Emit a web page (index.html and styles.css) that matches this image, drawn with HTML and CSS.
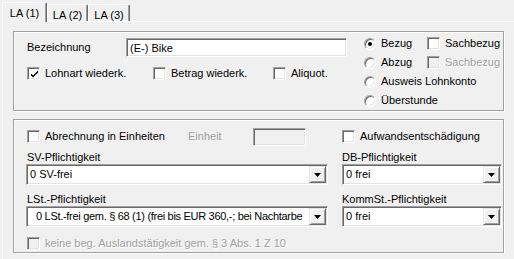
FILE: index.html
```html
<!DOCTYPE html>
<html lang="de">
<head>
  <meta charset="UTF-8" />
  <meta name="viewport" content="width=device-width, initial-scale=1.0" />
  <title>Lohnart</title>
  <link rel="stylesheet" href="styles.css">
</head>
<body>
  <div class="tabs">
    <div class="tab active tab-1">LA (1)</div>
    <div class="tab tab-2">LA (2)</div>
    <div class="tab tab-3">LA (3)</div>
  </div>
  <div class="panel">
    <div class="group group-top">
      <div class="top-left">
        <div class="row">
          <span class="name-label">Bezeichnung</span>
          <div class="textbox name-box">(E-) Bike</div>
        </div>
        <div class="row checks">
          <div class="check w-lohnart">
            <span class="box"><svg width="9" height="9" viewBox="0 0 9 9"><path d="M1 3.5 L1 5.5 L3 7.5 L8 2.5 L8 0.5 L3 5.5 Z" fill="#000"/></svg></span>Lohnart wiederk.
          </div>
          <div class="check w-betrag"><span class="box"></span>Betrag wiederk.</div>
          <div class="check"><span class="box"></span>Aliquot.</div>
        </div>
      </div>
      <div class="top-right">
        <div class="opt-row">
          <div class="opt w-bezug"><span class="radio on"></span>Bezug</div>
          <div class="check"><span class="box"></span>Sachbezug</div>
        </div>
        <div class="opt-row">
          <div class="opt w-bezug"><span class="radio"></span>Abzug</div>
          <div class="check disabled"><span class="box"></span>Sachbezug</div>
        </div>
        <div class="opt-row">
          <div class="opt"><span class="radio"></span>Ausweis Lohnkonto</div>
        </div>
        <div class="opt-row">
          <div class="opt"><span class="radio"></span>Überstunde</div>
        </div>
      </div>
    </div>

    <div class="group group-bottom">
      <div class="cols">
        <div class="col-left">
          <div class="row first">
            <div class="check w-abrechnung"><span class="box"></span>Abrechnung in Einheiten</div>
            <span class="unit-label">Einheit</span>
            <div class="textbox unit-box"></div>
          </div>
          <div class="field-label">SV-Pflichtigkeit</div>
          <div class="combo wide">
            <span class="combo-text">0 SV-frei</span>
            <span class="combo-btn"><svg width="7" height="4" viewBox="0 0 7 4"><path d="M0 0 H7 L3.5 4 Z" fill="#000"/></svg></span>
          </div>
          <div class="field-label second">LSt.-Pflichtigkeit</div>
          <div class="combo wide">
            <span class="combo-text indent">0 LSt.-frei gem. § 68 (1) (frei bis EUR 360,-; bei Nachtarbe</span>
            <span class="combo-btn"><svg width="7" height="4" viewBox="0 0 7 4"><path d="M0 0 H7 L3.5 4 Z" fill="#000"/></svg></span>
          </div>
        </div>
        <div class="col-right">
          <div class="row first">
            <div class="check"><span class="box"></span>Aufwandsentschädigung</div>
          </div>
          <div class="field-label">DB-Pflichtigkeit</div>
          <div class="combo narrow">
            <span class="combo-text">0 frei</span>
            <span class="combo-btn"><svg width="7" height="4" viewBox="0 0 7 4"><path d="M0 0 H7 L3.5 4 Z" fill="#000"/></svg></span>
          </div>
          <div class="field-label second">KommSt.-Pflichtigkeit</div>
          <div class="combo narrow">
            <span class="combo-text">0 frei</span>
            <span class="combo-btn"><svg width="7" height="4" viewBox="0 0 7 4"><path d="M0 0 H7 L3.5 4 Z" fill="#000"/></svg></span>
          </div>
        </div>
      </div>
      <div class="row last">
        <div class="check disabled"><span class="box"></span>keine beg. Auslandstätigkeit gem. § 3 Abs. 1 Z 10</div>
      </div>
    </div>
  </div>
</body>
</html>
```

FILE: styles.css
```css
body {
  margin: 0;
  background: #f0f0f0;
  color: #000;
  font-family: "Liberation Sans", Arial, sans-serif;
  font-size: 11px;
  line-height: 13px;
  overflow: hidden;
  width: 514px;
  height: 259px;
}

/* tabs */
.tabs {
  display: flex;
  align-items: flex-end;
  padding: 2px 0 0 2px;
}
.tab {
  box-sizing: border-box;
  height: 17px;
  padding-top: 4px;
  text-align: center;
  background: #f0f0f0;
  border-top: 1px solid #fff;
  border-left: 1px solid #fff;
  border-right: 1px solid #696969;
  box-shadow: inset -1px 0 0 #a0a0a0;
  border-radius: 2px 2px 0 0;
}
.tab-1 { width: 45px; }
.tab-2 { width: 41px; }
.tab-3 { width: 42px; }
.tab.active {
  height: 20px;
  margin-bottom: -1px;
  position: relative;
  z-index: 1;
}

.panel {
  box-sizing: border-box;
  margin-left: 2px;
  width: 512px;
  height: 238px;
  border-top: 1px solid #fff;
  border-left: 1px solid #fff;
  padding: 9px 0 0 10px;
}

/* group boxes */
.group {
  box-sizing: border-box;
  width: 491px;
  border: 1px solid #a0a0a0;
  box-shadow: inset 1px 1px 0 #fff, 1px 1px 0 #fff;
  padding-left: 13px;
}
.group-top {
  display: flex;
  height: 80px;
}
.group-bottom {
  margin-top: 8px;
  height: 134px;
  padding-top: 7px;
}

.row {
  display: flex;
  align-items: center;
}

.top-left {
  width: 320px;
  padding-top: 6px;
}
.name-label {
  width: 99px;
}
.textbox {
  box-sizing: border-box;
  background: #fff;
  border: 1px solid;
  border-color: #a0a0a0 #fff #fff #a0a0a0;
  box-shadow: inset 1px 1px 0 #696969, inset -1px -1px 0 #e3e3e3;
}
.name-box {
  width: 221px;
  height: 19px;
  padding: 3px 0 0 3px;
}
.checks {
  margin-top: 7px;
  height: 19px;
}

.top-right {
  margin-left: 17px;
  padding-top: 2px;
}
.opt-row {
  display: flex;
  align-items: center;
  height: 19px;
}
.opt, .check {
  display: flex;
  align-items: center;
  white-space: nowrap;
}
.w-bezug { width: 63px; }
.w-lohnart { width: 126px; }
.w-betrag { width: 120px; }
.w-abrechnung { width: 161px; }

/* checkbox */
.box {
  box-sizing: border-box;
  width: 13px;
  height: 13px;
  margin-right: 5px;
  background: #fff;
  border: 1px solid;
  border-color: #a0a0a0 #fff #fff #a0a0a0;
  box-shadow: inset 1px 1px 0 #696969, inset -1px -1px 0 #e3e3e3;
  display: flex;
  align-items: center;
  justify-content: center;
  padding: 1px 0 0 1px;
}
.disabled {
  color: #a0a0a0;
  text-shadow: 1px 1px 0 #fff;
}
.disabled .box {
  background: #f0f0f0;
}

/* radio */
.radio {
  box-sizing: border-box;
  width: 12px;
  height: 12px;
  margin-right: 5px;
  border-radius: 50%;
  background: #fff;
  border: 1px solid;
  border-color: #a0a0a0 #fff #fff #a0a0a0;
  box-shadow: inset 1px 1px 0 #696969, inset -1px -1px 0 #e3e3e3;
  display: flex;
  align-items: center;
  justify-content: center;
}
.radio.on::after {
  content: "";
  width: 4px;
  height: 4px;
  border-radius: 50%;
  background: #000;
}

/* bottom group */
.cols {
  display: flex;
  gap: 15px;
}
.col-left { width: 300px; }
.col-right { width: 160px; }
.first { height: 19px; }
.unit-label {
  width: 65px;
  color: #a0a0a0;
}
.unit-box {
  width: 53px;
  height: 18px;
  background: #f0f0f0;
}
.field-label {
  margin-top: 5px;
  height: 13px;
}
.field-label.second {
  margin-top: 8px;
}

.combo {
  box-sizing: border-box;
  height: 21px;
  display: flex;
  align-items: center;
  background: #fff;
  border: 1px solid;
  border-color: #a0a0a0 #fff #fff #a0a0a0;
  box-shadow: inset 1px 1px 0 #696969, inset -1px -1px 0 #e3e3e3;
  padding: 1px;
}
.combo.wide {
  width: 302px;
  margin-left: -1px;
}
.combo.narrow {
  width: 160px;
}
.combo-text {
  flex: 1;
  overflow: hidden;
  white-space: nowrap;
  padding-left: 2px;
}
.combo-text.indent {
  padding-left: 8px;
  letter-spacing: -0.3px;
}
.combo-btn {
  box-sizing: border-box;
  width: 17px;
  height: 17px;
  background: #f0f0f0;
  border: 1px solid;
  border-color: #e3e3e3 #696969 #696969 #e3e3e3;
  box-shadow: inset 1px 1px 0 #fff, inset -1px -1px 0 #a0a0a0;
  display: flex;
  align-items: center;
  justify-content: center;
}

.last {
  margin-top: 7px;
  height: 18px;
}
```
